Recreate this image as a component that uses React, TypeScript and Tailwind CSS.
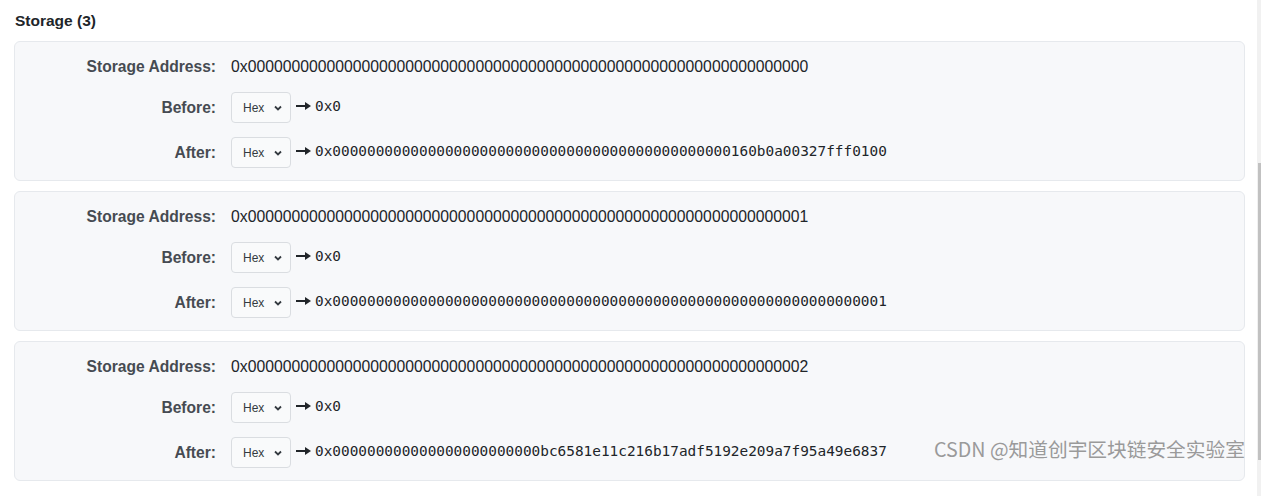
import React from "react";

type Slot = {
  address: string;
  before: string;
  after: string;
};

const ZEROS = "0".repeat(64);

const SLOTS: Slot[] = [
  {
    address: "0x" + ZEROS,
    before: "0x0",
    after: "0x" + "0".repeat(46) + "160b0a00327fff0100",
  },
  {
    address: "0x" + ZEROS.slice(1) + "1",
    before: "0x0",
    after: "0x" + ZEROS.slice(1) + "1",
  },
  {
    address: "0x" + ZEROS.slice(1) + "2",
    before: "0x0",
    after: "0x" + "0".repeat(24) + "bc6581e11c216b17adf5192e209a7f95a49e6837",
  },
];

function HexSelect() {
  return (
    <div className="w-[60px] h-[31px] shrink-0 rounded-[4px] border border-[#dadde1] bg-[#f9fafb] flex items-center pl-[11px] text-[12px] text-[#343a40]">
      <span>Hex</span>
      <svg className="ml-[10px] mt-[1px]" width="8" height="6" viewBox="0 0 8 6">
        <polyline points="1,1.5 4,4.5 7,1.5" fill="none" stroke="#343a40" strokeWidth="1.8" />
      </svg>
    </div>
  );
}

function Arrow() {
  return (
    <svg className="ml-[5px] mr-[4px] mb-[3px]" width="15" height="8" viewBox="0 0 15 8">
      <rect x="0" y="3" width="10" height="2" fill="#212529" />
      <polygon points="9,0 15,4 9,8" fill="#212529" />
    </svg>
  );
}

function Row({ label, children }: { label: string; children: React.ReactNode }) {
  return (
    <div className="flex items-center gap-[15px]">
      <div className="w-[201px] shrink-0 text-right font-bold text-[15.6px] text-[#464b52]">{label}</div>
      {children}
    </div>
  );
}

function SlotCard({ slot }: { slot: Slot }) {
  return (
    <div className="rounded-[6px] border border-[#e6e9ed] bg-[#f7f8fa] py-[12px] flex flex-col gap-[14px]">
      <div className="h-[24px] pt-[2px] flex items-center">
        <Row label="Storage Address:">
          <span className="text-[15.75px] text-[#212529]">{slot.address}</span>
        </Row>
      </div>
      <Row label="Before:">
        <div className="flex items-center">
          <HexSelect />
          <Arrow />
          <span className="font-['DejaVu_Sans_Mono',monospace] text-[14.4px] text-[#212529] mb-[1px]">{slot.before}</span>
        </div>
      </Row>
      <Row label="After:">
        <div className="flex items-center">
          <HexSelect />
          <Arrow />
          <span className="font-['DejaVu_Sans_Mono',monospace] text-[14.4px] text-[#212529] mb-[1px]">{slot.after}</span>
        </div>
      </Row>
    </div>
  );
}

export default function App() {
  return (
    <div className="relative w-[1261px] h-[496px] overflow-hidden bg-white flex font-['Liberation_Sans',Arial,sans-serif]">
      <div className="flex-1 pl-[14px] pr-[12px] pt-[9px]">
        <h3 className="h-[24px] leading-[24px] mb-[8px] pl-[1px] font-bold text-[15.5px] text-[#212529]">Storage (3)</h3>
        <div className="flex flex-col gap-[10px]">
          {SLOTS.map((slot, i) => (
            <SlotCard key={i} slot={slot} />
          ))}
        </div>
      </div>

      {/* scrollbar */}
      <div className="w-[4px] h-full bg-[#f1f1f1] flex flex-col">
        <div className="mt-[163px] h-[297px] ml-[1px] bg-[#c1c1c1]" />
      </div>

      {/* watermark */}
      <div className="absolute left-[934px] top-[435px] text-[19.7px] leading-[28px] text-[#9a9a9a] font-['Noto_Sans_CJK_SC',sans-serif]">
        CSDN @知道创宇区块链安全实验室
      </div>
    </div>
  );
}
